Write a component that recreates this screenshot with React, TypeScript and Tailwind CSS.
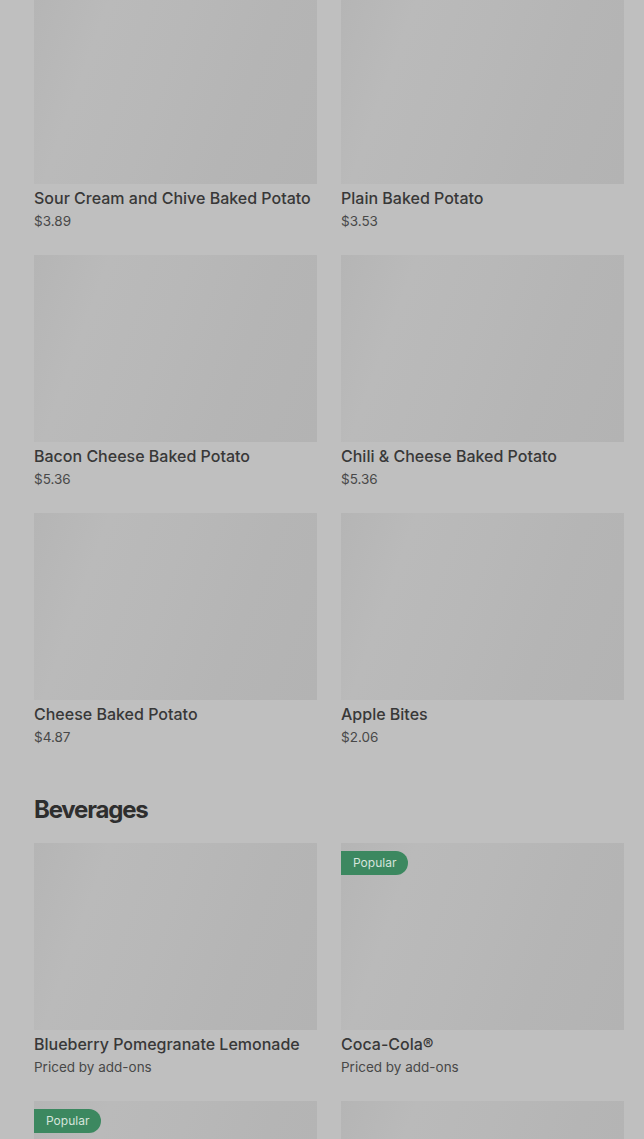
type Item = { name: string; price: string; popular?: boolean }

const sides: Item[] = [
  { name: 'Sour Cream and Chive Baked Potato', price: '$3.89' },
  { name: 'Plain Baked Potato', price: '$3.53' },
  { name: 'Bacon Cheese Baked Potato', price: '$5.36' },
  { name: 'Chili & Cheese Baked Potato', price: '$5.36' },
  { name: 'Cheese Baked Potato', price: '$4.87' },
  { name: 'Apple Bites', price: '$2.06' },
]

const beverages: Item[] = [
  { name: 'Blueberry Pomegranate Lemonade', price: 'Priced by add-ons' },
  { name: 'Coca-Cola®', price: 'Priced by add-ons', popular: true },
  { name: 'Lemonade', price: 'Priced by add-ons', popular: true },
  { name: 'Iced Tea', price: 'Priced by add-ons' },
]

const Card = ({ item }: { item: Item }) => (
  <div className="flex flex-col">
    <div className="relative h-[187px] w-full bg-[linear-gradient(110deg,#b5b5b5_0%,#bababa_22%,#b8b8b8_45%,#b5b5b5_70%,#b3b3b3_100%)]">
      {item.popular && (
        <span className="absolute left-0 top-2 flex h-6 items-center rounded-r-full bg-[#3c8860] px-3 text-[12px] text-[#d6e4dc]">
          Popular
        </span>
      )}
    </div>
    <div className="mt-1 truncate text-[16px] font-medium leading-5 text-[#383838]">{item.name}</div>
    <div className="mt-[3px] text-[13.5px] leading-5 text-[#484848]">{item.price}</div>
  </div>
)

export default function App() {
  return (
    <div className="h-[1139px] overflow-hidden bg-[#bfbfbf] font-['Inter',sans-serif]">
      <div className="-mt-[3px] pl-[34px] pr-[20px]">
        <div className="grid grid-cols-2 gap-x-6 gap-y-6">
          {sides.map((it) => (
            <Card key={it.name} item={it} />
          ))}
        </div>
        <h2 className="mb-[17px] mt-[47px] text-[24px] font-bold leading-8 tracking-[-1.2px] text-[#2e2e2e]">Beverages</h2>
        <div className="grid grid-cols-2 gap-x-6 gap-y-6">
          {beverages.map((it) => (
            <Card key={it.name} item={it} />
          ))}
        </div>
      </div>
    </div>
  )
}
